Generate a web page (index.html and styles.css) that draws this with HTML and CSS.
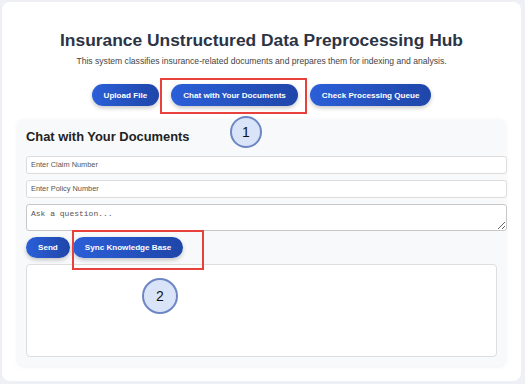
FILE: index.html
```html
<!DOCTYPE html>
<html lang="en">
<head>
  <meta charset="UTF-8" />
  <meta name="viewport" content="width=device-width, initial-scale=1.0"/>
  <title>Insurance Unstructured Data Preprocessing Hub</title>
<link rel="stylesheet" href="styles.css">
</head>
<body>

  <div class="container">
    <h1>Insurance Unstructured Data Preprocessing Hub</h1>
    <p class="intro">This system classifies insurance-related documents and prepares them for indexing and analysis.</p>

    <div class="nav">
      <button class="btn">Upload File</button>
      <button class="btn">Chat with Your Documents</button>
      <button class="btn">Check Processing Queue</button>
    </div>

    <div class="card">
      <h2>Chat with Your Documents</h2>
      <input type="text" placeholder="Enter Claim Number" />
      <input type="text" placeholder="Enter Policy Number" />
      <textarea placeholder="Ask a question..."></textarea>
      <div class="actions">
        <button class="btn small">Send</button>
        <button class="btn small">Sync Knowledge Base</button>
      </div>
      <div class="response"></div>
    </div>

    <div class="mark mark-1"></div>
    <div class="mark mark-2"></div>
    <div class="badge badge-1">1</div>
    <div class="badge badge-2">2</div>
  </div>

</body>
</html>
```

FILE: styles.css
```css
body {
  font-family: "Liberation Sans", Arial, sans-serif;
  background-color: #eff0f5;
  margin: 0;
  padding: 2px 4px 3px 2px;
}

.container {
  position: relative;
  background: #fff;
  border-radius: 8px;
  height: 379px;
  box-sizing: border-box;
  padding-top: 28px;
}

h1 {
  margin: 0;
  text-align: center;
  font-size: 17.4px;
  line-height: 20px;
  color: #2b3445;
}

.intro {
  margin: 6px 0 0;
  text-align: center;
  font-size: 8.6px;
  line-height: 10px;
  color: #444;
}

.nav {
  display: flex;
  justify-content: center;
  gap: 12px;
  margin-top: 18px;
}

.btn {
  font-family: "Liberation Sans", Arial, sans-serif;
  background: linear-gradient(90deg, #2b5fd8, #1f46a9);
  color: #fff;
  border: none;
  border-radius: 11px;
  height: 22px;
  padding: 0 12px;
  font-size: 8.1px;
  font-weight: bold;
  box-shadow: 0 2px 4px rgba(0,0,0,0.22);
  cursor: pointer;
}

.card {
  margin: 13px 15px 0;
  background: #f8f9fa;
  border-radius: 7px;
  box-shadow: 0 1px 4px rgba(0,0,0,0.06);
  padding: 10px 9px 9px;
}

h2 {
  margin: 0 0 11px;
  font-size: 12.9px;
  line-height: 16px;
  color: #222;
}

input, textarea {
  display: block;
  width: 100%;
  padding: 4px;
  border: 1px solid #dcdcdc;
  border-radius: 3px;
  background: #fff;
  margin: 0 0 6px;
}

input {
  font-family: "Liberation Sans", Arial, sans-serif;
  font-size: 7.4px;
  line-height: 8px;
  height: 8px;
}

input::placeholder {
  color: #555;
}

textarea {
  font-family: "Liberation Mono", monospace;
  font-size: 8px;
  height: 17px;
  line-height: 9px;
  resize: vertical;
  border-color: #c8c8c8;
}

textarea::placeholder {
  color: #555;
}

.actions {
  display: flex;
  gap: 3px;
  margin-bottom: 6px;
}

.btn.small {
  height: 21px;
  padding: 0 12px;
}

.response {
  height: 93px;
  box-sizing: border-box;
  background: #fff;
  border: 1px solid #dedede;
  border-radius: 4px;
}

.mark {
  position: absolute;
  border: 2px solid #e8403a;
}

.mark-1 {
  left: 158px;
  top: 76px;
  width: 143px;
  height: 32px;
}

.mark-2 {
  left: 70px;
  top: 228px;
  width: 128px;
  height: 36px;
}

.badge {
  position: absolute;
  box-sizing: border-box;
  border-radius: 50%;
  background: #d9e4f8;
  border: 2px solid #6d87c4;
  color: #111;
  font-size: 14px;
  display: flex;
  align-items: center;
  justify-content: center;
}

.badge-1 {
  left: 228px;
  top: 114px;
  width: 32px;
  height: 32px;
}

.badge-2 {
  left: 140px;
  top: 276px;
  width: 36px;
  height: 36px;
}
```
